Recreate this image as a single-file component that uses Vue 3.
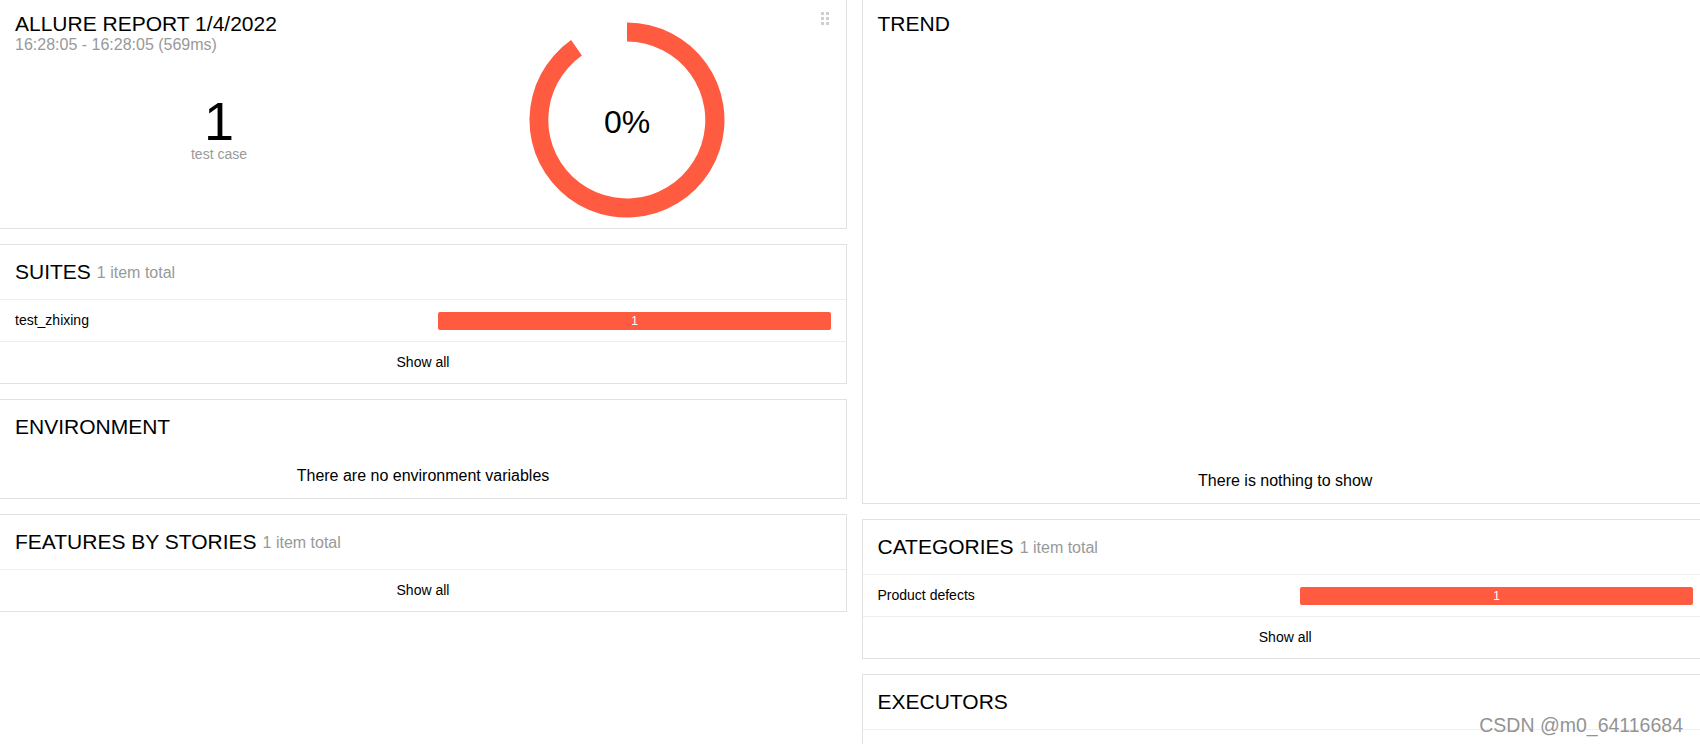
<script setup>
const ringPath = 'M 626.5 22.5 A 97.5 97.5 0 1 1 570.6 40.1 L 581.4 55.6 A 78.5 78.5 0 1 0 626.5 41.5 Z'
</script>

<template>
  <div class="page">
    <div class="column">
      <section class="card summary">
        <div class="summary-left">
          <div class="report-title">ALLURE REPORT 1/4/2022</div>
          <div class="report-time">16:28:05 - 16:28:05 (569ms)</div>
          <div class="stat">
            <div class="stat-num">1</div>
            <div class="stat-label">test case</div>
          </div>
        </div>
        <div class="summary-right">
          <svg class="donut" width="200" height="200" viewBox="526.5 20 200 200">
            <path :d="ringPath" fill="#ff5b40" />
            <text x="626.5" y="133" text-anchor="middle" class="donut-text">0%</text>
          </svg>
        </div>
        <svg class="handle" width="8" height="13" viewBox="0 0 8 13">
          <g fill="#cfcfcf">
            <rect x="0" y="0" width="3" height="3" /><rect x="5" y="0" width="3" height="3" />
            <rect x="0" y="5" width="3" height="3" /><rect x="5" y="5" width="3" height="3" />
            <rect x="0" y="10" width="3" height="3" /><rect x="5" y="10" width="3" height="3" />
          </g>
        </svg>
      </section>

      <section class="card">
        <header class="head ruled"><span class="title">SUITES</span> <span class="total">1 item total</span></header>
        <div class="row ruled">
          <span class="row-name">test_zhixing</span>
          <div class="bar">1</div>
        </div>
        <div class="show">Show all</div>
      </section>

      <section class="card">
        <header class="head"><span class="title">ENVIRONMENT</span></header>
        <div class="message">There are no environment variables</div>
      </section>

      <section class="card">
        <header class="head ruled"><span class="title">FEATURES BY STORIES</span> <span class="total">1 item total</span></header>
        <div class="show">Show all</div>
      </section>
    </div>

    <div class="column">
      <section class="card trend">
        <header class="head"><span class="title">TREND</span></header>
        <div class="message">There is nothing to show</div>
      </section>

      <section class="card">
        <header class="head ruled"><span class="title">CATEGORIES</span> <span class="total">1 item total</span></header>
        <div class="row ruled">
          <span class="row-name">Product defects</span>
          <div class="bar">1</div>
        </div>
        <div class="show">Show all</div>
      </section>

      <section class="card">
        <header class="head ruled"><span class="title">EXECUTORS</span></header>
        <div class="show"></div>
      </section>
    </div>

    <div class="watermark">CSDN @m0_64116684</div>
  </div>
</template>

<style scoped>
.page {
  position: relative;
  display: flex;
  gap: 14.5px;
  width: 1700px;
  height: 744px;
  overflow: hidden;
  background: #fff;
  color: #000;
  font-family: "Liberation Sans", Arial, sans-serif;
}
.column {
  flex: 0 0 848px;
  display: flex;
  flex-direction: column;
  gap: 15px;
  margin-top: -4px;
}
.column:first-child {
  margin-left: -1px;
}
.column:nth-child(2) {
  flex-basis: 847.5px;
}
.card {
  position: relative;
  flex: none;
  border: 1px solid #e2e2e2;
  background: #fff;
}
.summary {
  height: 233px;
  box-sizing: border-box;
  padding: 0 15px;
  display: grid;
  grid-template-columns: 408px 408px;
}
.summary-left {
  display: flex;
  flex-direction: column;
  padding-top: 15px;
}
.report-title {
  font-size: 21px;
  line-height: 24px;
}
.report-time {
  font-size: 16px;
  line-height: 18px;
  color: #999;
}
.stat {
  margin-top: 42px;
  text-align: center;
}
.stat-num {
  font-size: 54px;
  line-height: 50px;
}
.stat-label {
  font-size: 14px;
  line-height: 16px;
  color: #999;
}
.summary-right {
  display: flex;
  justify-content: center;
}
.donut {
  margin-top: 23px;
}
.donut-text {
  font-size: 32px;
  fill: #000;
}
.handle {
  position: absolute;
  top: 15px;
  right: 17px;
}
.head {
  height: 54px;
  padding: 0 15px;
  display: flex;
  align-items: center;
  gap: 6px;
}
.ruled {
  border-bottom: 1px solid #eeeeee;
}
.title {
  font-size: 21px;
  line-height: 24px;
}
.total {
  font-size: 16px;
  color: #999;
  margin-top: 2px;
}
.row {
  height: 41px;
  padding: 0 15px;
  display: flex;
  align-items: center;
  justify-content: space-between;
  font-size: 14px;
}
.row-name {
  padding-bottom: 1px;
}
.bar {
  width: 393px;
  height: 18px;
  border-radius: 2px;
  background: #ff5b40;
  color: #fff;
  font-size: 12px;
  line-height: 18px;
  text-align: center;
}
.show {
  height: 41px;
  line-height: 41px;
  font-size: 14px;
  text-align: center;
}
.message {
  height: 44px;
  line-height: 44px;
  font-size: 16px;
  text-align: center;
}
.trend {
  height: 508px;
  box-sizing: border-box;
  display: flex;
  flex-direction: column;
  justify-content: space-between;
}
.watermark {
  position: absolute;
  right: 17px;
  top: 713px;
  font-size: 19.5px;
  line-height: 24px;
  color: #939393;
  text-shadow: 0 0 1px #fff;
}
</style>
